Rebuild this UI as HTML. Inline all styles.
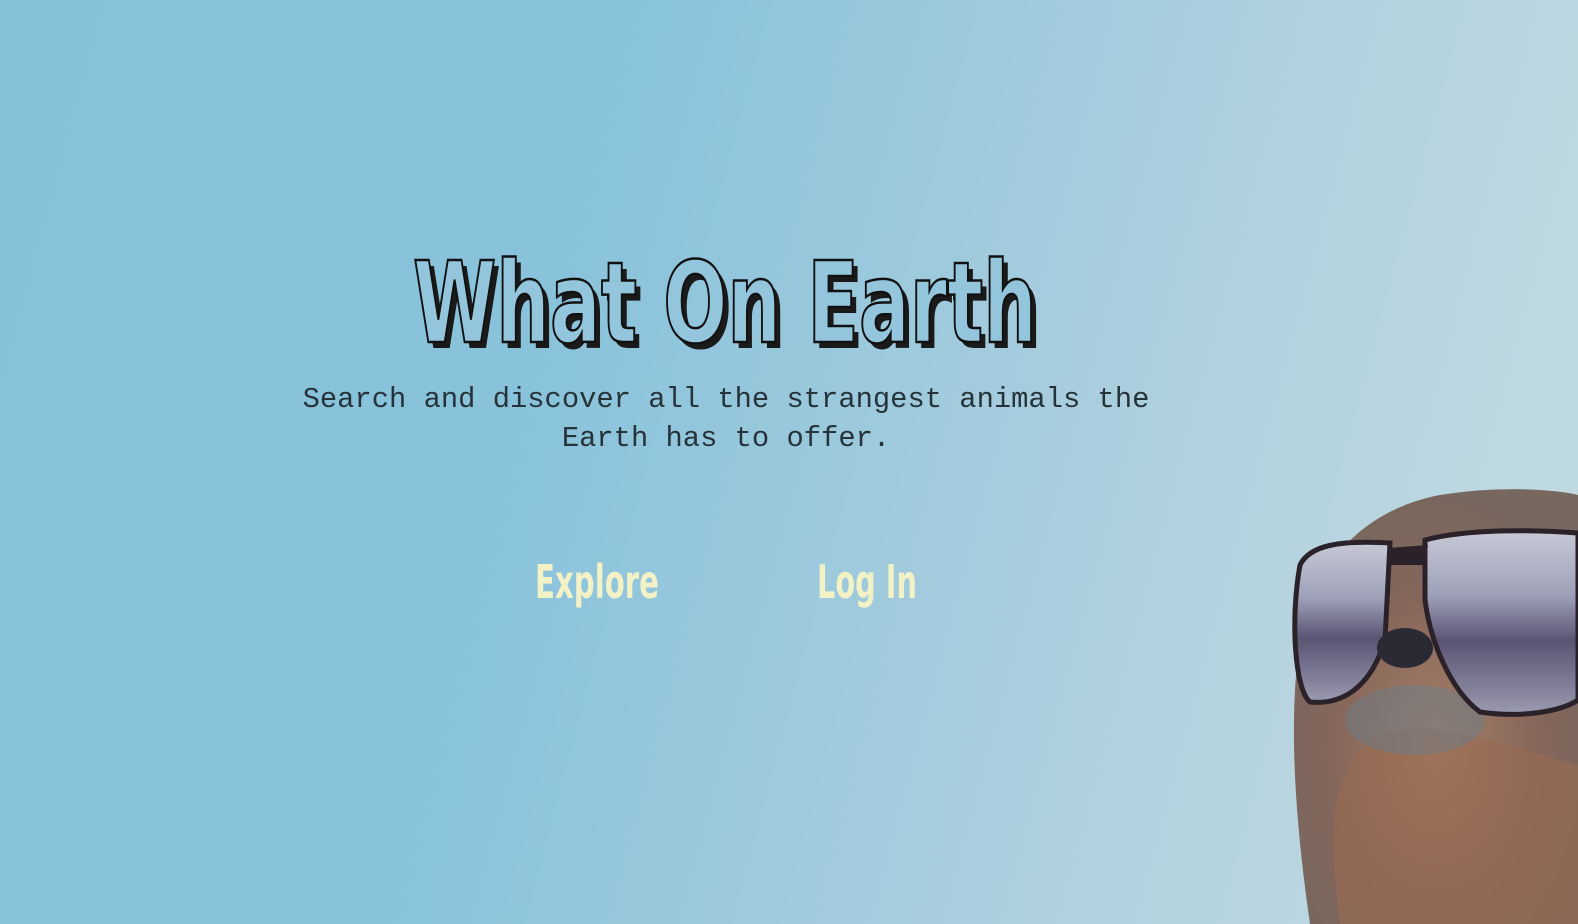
<!DOCTYPE html>
<html><head><meta charset="utf-8"><style>
html,body{margin:0;padding:0;width:1578px;height:924px;overflow:hidden}
body{background:linear-gradient(105deg,#86c1da 0%,#89c3db 35%,#9ecadd 55%,#b3d2df 75%,#c4dce2 100%);position:relative;font-family:"Liberation Sans",sans-serif}
.sub{position:absolute;left:0;width:1452px;top:380px;text-align:center;font-family:"Liberation Mono",monospace;font-size:28.8px;line-height:39px;color:#26343a}
svg{position:absolute;left:0;top:0}
</style></head><body>
<svg width="1578" height="924" viewBox="0 0 1578 924">
<defs>
<radialGradient id="fur" cx="0.5" cy="0.6" r="0.6"><stop offset="0" stop-color="#a88068"/><stop offset="0.6" stop-color="#85665a"/><stop offset="1" stop-color="#77675f"/></radialGradient>
<linearGradient id="lens" x1="0" y1="0" x2="0" y2="1"><stop offset="0" stop-color="#c7c9d6"/><stop offset="0.35" stop-color="#9ea0b8"/><stop offset="0.6" stop-color="#5a5473"/><stop offset="1" stop-color="#9a9ab0"/></linearGradient>
</defs>
<path d="M1310 924 C1295 820 1288 720 1300 640 C1310 570 1360 510 1440 495 C1500 485 1560 490 1578 495 L1578 924 Z" fill="url(#fur)"/>
<path d="M1340 924 C1325 820 1335 760 1380 735 C1430 715 1500 745 1578 765 L1578 924 Z" fill="#9a6a50" opacity="0.6"/>
<ellipse cx="1415" cy="720" rx="70" ry="35" fill="#6b7c88" opacity="0.5"/>
<path d="M1300 565 C1310 545 1340 540 1390 543 L1385 640 C1370 690 1340 705 1310 702 C1295 690 1290 620 1300 565 Z" fill="url(#lens)" stroke="#2a2228" stroke-width="5"/>
<path d="M1425 540 C1470 528 1540 530 1578 533 L1578 700 C1560 712 1520 718 1480 712 C1450 690 1430 640 1425 600 Z" fill="url(#lens)" stroke="#2a2228" stroke-width="5"/>
<path d="M1388 548 L1428 545 L1425 565 L1388 565 Z" fill="#2a2228"/>
<ellipse cx="1405" cy="648" rx="28" ry="20" fill="#2a2a35"/>
<text x="727" y="345" text-anchor="middle" textLength="624" lengthAdjust="spacingAndGlyphs" font-family="DejaVu Sans Condensed, DejaVu Sans, sans-serif" font-weight="bold" font-size="112" fill="#1a1a1a" transform="translate(3,3)">What On Earth</text>
<text x="725" y="342" text-anchor="middle" textLength="624" lengthAdjust="spacingAndGlyphs" font-family="DejaVu Sans Condensed, DejaVu Sans, sans-serif" font-weight="bold" font-size="112" fill="#93c6dc" stroke="#111" stroke-width="2.5">What On Earth</text>
<text x="597" y="598" text-anchor="middle" textLength="124" lengthAdjust="spacingAndGlyphs" font-family="DejaVu Sans Condensed, DejaVu Sans, sans-serif" font-weight="bold" font-size="46" fill="#f3f1c6">Explore</text>
<text x="867" y="598" text-anchor="middle" textLength="100" lengthAdjust="spacingAndGlyphs" font-family="DejaVu Sans Condensed, DejaVu Sans, sans-serif" font-weight="bold" font-size="46" fill="#f3f1c6">Log In</text>
</svg>
<div class="sub">Search and discover all the strangest animals the<br>Earth has to offer.</div>
</body></html>
